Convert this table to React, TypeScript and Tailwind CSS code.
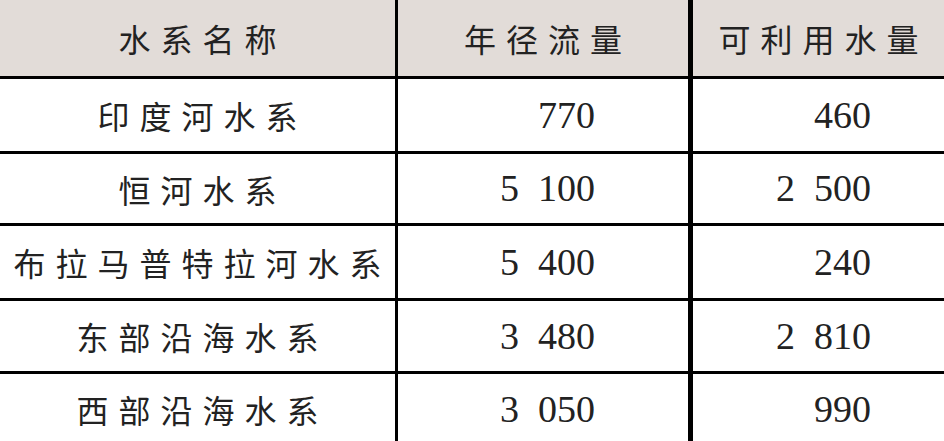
const ROWS = [
  { name: "印度河水系", flow: "770", usable: "460", h: "h-[72px]" },
  { name: "恒河水系", flow: "5\u2002100", usable: "2\u2002500", h: "h-[69px]" },
  { name: "布拉马普特拉河水系", flow: "5\u2002400", usable: "240", h: "h-[72px]" },
  { name: "东部沿海水系", flow: "3\u2002480", usable: "2\u2002810", h: "h-[70px]" },
  { name: "西部沿海水系", flow: "3\u2002050", usable: "990", h: "h-[70px]" },
];

export default function App() {
  return (
    <div className="w-[944px] h-[441px] overflow-hidden bg-white text-[#222]">
      {/* Header */}
      <div className="flex h-[79px] border-b-[3px] border-black bg-[#e2dcd8] font-['Noto_Sans_CJK_SC'] text-[32px] tracking-[10px]">
        <div className="w-[398px] border-r-[3px] border-black flex items-center justify-center pl-[10px]">
          水系名称
        </div>
        <div className="w-[295px] border-r-[5px] border-black flex items-center justify-center pl-[10px]">
          年径流量
        </div>
        <div className="flex-1 flex items-center justify-center pl-[10px]">
          可利用水量
        </div>
      </div>

      {/* Rows */}
      {ROWS.map((row, i) => (
        <div
          key={row.name}
          className={`flex ${row.h} ${i < ROWS.length - 1 ? "border-b-[3px] border-black box-content" : ""}`}
        >
          <div className="w-[398px] border-r-[3px] border-black flex items-center justify-center pl-[10px] text-[32px] tracking-[10px] whitespace-nowrap font-['Noto_Sans_CJK_SC']">
            {row.name}
          </div>
          <div className="w-[295px] border-r-[5px] border-black flex items-center justify-end pr-[93px] text-[38px] whitespace-pre font-['Liberation_Serif']">
            {row.flow}
          </div>
          <div className="flex-1 flex items-center justify-end pr-[73px] text-[38px] whitespace-pre font-['Liberation_Serif']">
            {row.usable}
          </div>
        </div>
      ))}
    </div>
  );
}
